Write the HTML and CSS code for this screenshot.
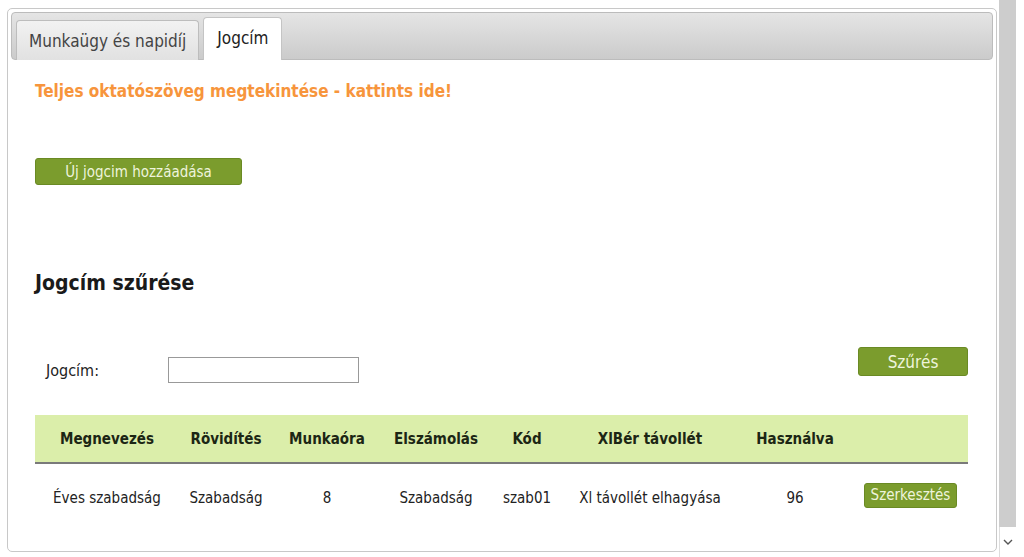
FILE: index.html
```html
<!DOCTYPE html>
<html lang="hu">
<head>
  <meta charset="UTF-8" />
  <title>Jogcím</title>
  <link rel="stylesheet" href="styles.css">
</head>
<body>
  <div class="page">
    <div class="tabs">
      <ul class="tab-nav">
        <li class="tab"><a href="#munkaugy">Munkaügy és napidíj</a></li>
        <li class="tab active"><a href="#jogcim">Jogcím</a></li>
      </ul>

      <div class="tab-panel" id="jogcim">
        <a class="help-link" href="#">Teljes oktatószöveg megtekintése - kattints ide!</a>

        <div class="add-row">
          <button class="btn btn-add">Új jogcim hozzáadása</button>
        </div>

        <h2>Jogcím szűrése</h2>

        <form class="filter" onsubmit="return false">
          <label for="f-jogcim">Jogcím:</label>
          <input type="text" id="f-jogcim" />
          <button class="btn btn-filter">Szűrés</button>
        </form>

        <table class="list">
          <colgroup>
            <col style="width:144px">
            <col style="width:94px">
            <col style="width:108px">
            <col style="width:110px">
            <col style="width:72px">
            <col style="width:174px">
            <col style="width:116px">
            <col>
          </colgroup>
          <thead>
            <tr>
              <th>Megnevezés</th>
              <th>Rövidítés</th>
              <th>Munkaóra</th>
              <th>Elszámolás</th>
              <th>Kód</th>
              <th>XlBér távollét</th>
              <th>Használva</th>
              <th></th>
            </tr>
          </thead>
          <tbody>
            <tr>
              <td>Éves szabadság</td>
              <td>Szabadság</td>
              <td>8</td>
              <td>Szabadság</td>
              <td>szab01</td>
              <td>Xl távollét elhagyása</td>
              <td>96</td>
              <td><button class="btn btn-edit">Szerkesztés</button></td>
            </tr>
          </tbody>
        </table>
      </div>
    </div>

    <div class="scrollbar">
      <div class="thumb"></div>
      <div class="arrow">
        <svg width="10" height="6" viewBox="0 0 10 6"><path d="M1 1 L5 5 L9 1" fill="none" stroke="#555" stroke-width="1.4"/></svg>
      </div>
    </div>
  </div>
</body>
</html>
```

FILE: styles.css
```css
body {
  margin: 0;
  padding: 0;
  background: #fff;
  font-family: "DejaVu Sans Condensed", "DejaVu Sans", sans-serif;
  font-stretch: condensed;
  color: #222;
}

.page {
  display: flex;
  height: 557px;
  overflow: hidden;
}

.tabs {
  width: 990px;
  margin: 8px 0 6px 7px;
  border: 1px solid #c8c8c8;
  border-radius: 5px;
  padding: 3px;
  box-sizing: border-box;
  height: 544px;
}

.tab-nav {
  list-style: none;
  margin: 0;
  padding: 0 4px;
  height: 48px;
  box-sizing: border-box;
  display: flex;
  gap: 4px;
  align-items: flex-end;
  background: linear-gradient(#e5e5e5, #cbcbcb);
  border: 1px solid #bcbcbc;
  border-radius: 4px;
}

.tab {
  height: 40px;
  background: linear-gradient(#f2f2f2, #e1e1e1);
  border: 1px solid #bdbdbd;
  border-bottom: none;
  border-radius: 4px 4px 0 0;
  margin-bottom: -1px;
  box-sizing: border-box;
  display: flex;
  align-items: center;
}

.tab a {
  color: #444;
  text-decoration: none;
  font-size: 17px;
  padding: 0 12px;
}

.tab.active {
  background: #fff;
  height: 43px;
  border-color: #c4c4c4;
  padding-bottom: 2px;
}

.tab.active a {
  color: #222;
  padding: 0 13px;
}

.tab-panel {
  padding: 21px 25px 0 24px;
}

.help-link {
  display: block;
  color: #f7953c;
  font-weight: bold;
  font-size: 17px;
  text-decoration: none;
}

.btn {
  background: #7b9c2d;
  border: 1px solid #6a8a24;
  border-radius: 3px;
  color: #eef4dc;
  font-family: inherit;
  font-stretch: condensed;
  cursor: pointer;
  padding: 0;
}

.add-row {
  margin-top: 57px;
}

.btn-add {
  width: 207px;
  height: 27px;
  font-size: 15px;
}

h2 {
  margin: 86px 0 0;
  font-size: 21px;
  font-weight: bold;
  color: #1a1a1a;
}

.filter {
  display: flex;
  align-items: center;
  margin-top: 62px;
  height: 26px;
}

.filter label {
  font-size: 16px;
  color: #222;
  width: 122px;
  padding-left: 11px;
}

.filter input {
  width: 191px;
  height: 26px;
  box-sizing: border-box;
  border: 1px solid #999;
}

.btn-filter {
  margin-left: auto;
  align-self: flex-start;
  width: 110px;
  height: 29px;
  font-size: 17px;
  margin-top: -10px;
}

.list {
  width: 933px;
  margin-top: 32px;
  border-collapse: collapse;
  table-layout: fixed;
}

.list th {
  background: #dbeeaa;
  height: 47px;
  font-size: 15px;
  font-weight: bold;
  color: #1c2614;
  border-bottom: 2px solid #7a7a7a;
  padding: 0;
}

.list td {
  height: 68px;
  font-size: 15px;
  text-align: center;
  color: #222;
  padding: 0;
}

.btn-edit {
  display: block;
  height: 25px;
  margin: -6px auto 0;
  padding: 0 6px;
  font-size: 15px;
}

.scrollbar {
  width: 17px;
  margin-left: 2px;
  background: #cdcdcd;
  display: flex;
  flex-direction: column;
  height: 557px;
}

.thumb {
  flex: 1;
}

.arrow {
  height: 30px;
  background: #fff;
  display: flex;
  align-items: center;
  justify-content: center;
  border-left: 1px solid #ddd;
}
```
